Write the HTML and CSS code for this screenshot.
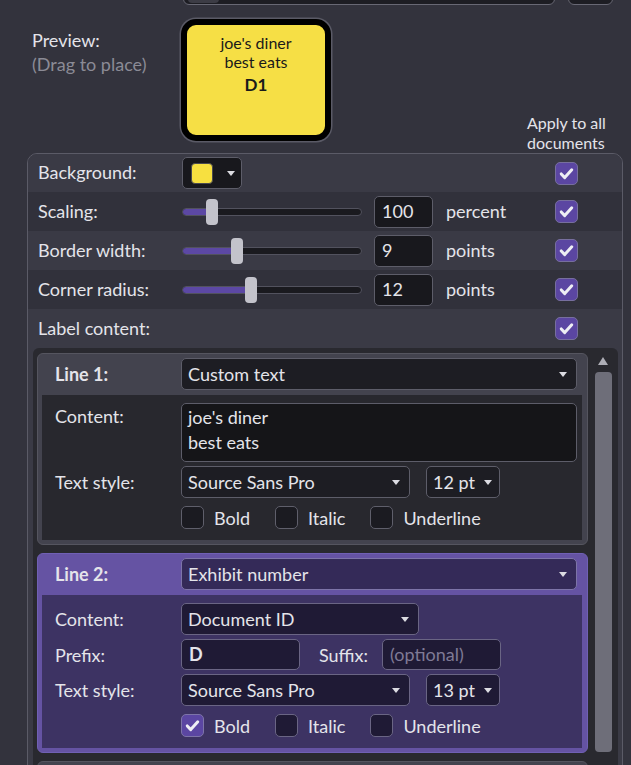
FILE: index.html
```html
<!DOCTYPE html>
<html>
<head>
    <title>Label settings</title>
    <link rel="stylesheet" href="styles.css">
</head>
<body>
    <div class="top-strip">
        <div class="stub wide"><span class="stub-knob"></span></div>
        <div class="stub small"></div>
    </div>

    <div class="preview-row">
        <div class="preview-label">
            <div>Preview:</div>
            <div class="muted">(Drag to place)</div>
        </div>
        <div class="tile">
            <div>joe's diner</div>
            <div>best eats</div>
            <div class="tile-id">D1</div>
        </div>
        <div class="apply-all">Apply to all documents</div>
    </div>

    <div class="panel">
        <div class="row light">
            <span class="row-label">Background:</span>
            <div class="color-btn"><span class="swatch"></span><span class="caret"></span></div>
            <span class="check on"><svg viewBox="0 0 24 24"><path d="M6 12.5l4 4.2 8-9"/></svg></span>
        </div>
        <div class="row dark">
            <span class="row-label">Scaling:</span>
            <div class="slider"><span class="fill" style="width: 29px"></span><span class="handle" style="left: 23px"></span></div>
            <div class="num">100</div>
            <span class="unit">percent</span>
            <span class="check on"><svg viewBox="0 0 24 24"><path d="M6 12.5l4 4.2 8-9"/></svg></span>
        </div>
        <div class="row light">
            <span class="row-label">Border width:</span>
            <div class="slider"><span class="fill" style="width: 54px"></span><span class="handle" style="left: 48px"></span></div>
            <div class="num">9</div>
            <span class="unit">points</span>
            <span class="check on"><svg viewBox="0 0 24 24"><path d="M6 12.5l4 4.2 8-9"/></svg></span>
        </div>
        <div class="row dark">
            <span class="row-label">Corner radius:</span>
            <div class="slider"><span class="fill" style="width: 68px"></span><span class="handle" style="left: 62px"></span></div>
            <div class="num">12</div>
            <span class="unit">points</span>
            <span class="check on"><svg viewBox="0 0 24 24"><path d="M6 12.5l4 4.2 8-9"/></svg></span>
        </div>
        <div class="row light">
            <span class="row-label">Label content:</span>
            <span class="check on"><svg viewBox="0 0 24 24"><path d="M6 12.5l4 4.2 8-9"/></svg></span>
        </div>

        <div class="list">
            <div class="cards">
                <div class="card">
                    <div class="card-head">
                        <span class="card-title">Line 1:</span>
                        <div class="select grow">Custom text<span class="caret"></span></div>
                    </div>
                    <div class="card-body">
                        <div class="field">
                            <span class="field-label top">Content:</span>
                            <div class="textarea">joe's diner<br>best eats</div>
                        </div>
                        <div class="field">
                            <span class="field-label">Text style:</span>
                            <div class="select font">Source Sans Pro<span class="caret"></span></div>
                            <div class="select size">12 pt<span class="caret"></span></div>
                        </div>
                        <div class="field styles">
                            <span class="check"></span><span class="opt">Bold</span>
                            <span class="check"></span><span class="opt">Italic</span>
                            <span class="check"></span><span class="opt">Underline</span>
                        </div>
                    </div>
                </div>

                <div class="card active">
                    <div class="card-head">
                        <span class="card-title">Line 2:</span>
                        <div class="select grow">Exhibit number<span class="caret"></span></div>
                    </div>
                    <div class="card-body">
                        <div class="field">
                            <span class="field-label">Content:</span>
                            <div class="select doc">Document ID<span class="caret"></span></div>
                        </div>
                        <div class="field">
                            <span class="field-label">Prefix:</span>
                            <div class="input short prefix">D</div>
                            <span class="suffix-label">Suffix:</span>
                            <div class="input short placeholder">(optional)</div>
                        </div>
                        <div class="field">
                            <span class="field-label">Text style:</span>
                            <div class="select font">Source Sans Pro<span class="caret"></span></div>
                            <div class="select size">13 pt<span class="caret"></span></div>
                        </div>
                        <div class="field styles">
                            <span class="check on"><svg viewBox="0 0 24 24"><path d="M6 12.5l4 4.2 8-9"/></svg></span><span class="opt">Bold</span>
                            <span class="check"></span><span class="opt">Italic</span>
                            <span class="check"></span><span class="opt">Underline</span>
                        </div>
                    </div>
                </div>

                <div class="card next"></div>
            </div>
            <div class="scrollbar">
                <span class="arrow-up"></span>
                <span class="thumb"></span>
            </div>
        </div>
    </div>
</body>
</html>
```

FILE: styles.css
```css
body {
    margin: 0;
    background-color: #33333d;
    color: #e4e4ea;
    font-family: Lato, "Noto Sans", sans-serif;
    font-size: 18px;
    overflow: hidden;
}

.top-strip {
    height: 5px;
    overflow: hidden;
    display: flex;
    align-items: flex-end;
    padding-left: 183px;
}
.stub {
    height: 30px;
    box-sizing: border-box;
    border: 1.5px solid #686874;
    border-radius: 6px;
    background-color: #1d1d23;
    flex-shrink: 0;
}
.stub.wide {
    width: 372px;
    padding: 0 0 0 4px;
}
.stub-knob {
    display: block;
    width: 31px;
    height: 27px;
    border-radius: 4px;
    background-color: #3c3c45;
}
.stub.small {
    width: 45px;
    margin-left: 13px;
}

.preview-row {
    display: flex;
    align-items: flex-start;
    margin-top: 14px;
}
.preview-label {
    width: 181px;
    padding: 9px 0 0 32px;
    line-height: 24px;
    box-sizing: border-box;
    flex-shrink: 0;
}
.muted {
    color: #8b8b96;
}
.tile {
    width: 150px;
    height: 122px;
    box-sizing: border-box;
    border: 6px solid #000;
    border-radius: 15px;
    box-shadow: 0 0 0 1.5px #5a5a66;
    background-color: #f6df45;
    color: #1a1a1a;
    text-align: center;
    font-size: 16px;
    line-height: 19px;
    padding-top: 8px;
    margin-bottom: 12px;
}
.tile-id {
    font-weight: bold;
    font-size: 17px;
    margin-top: 4px;
}
.apply-all {
    align-self: flex-end;
    margin-left: auto;
    margin-right: 20px;
    width: 84px;
    font-size: 16px;
    line-height: 20px;
}

.panel {
    margin-left: 27px;
    width: 596px;
    box-sizing: border-box;
    border: 1px solid #5b5b67;
    border-radius: 10px;
    background-color: #3a3a45;
    overflow: hidden;
    height: 640px;
}
.row {
    height: 39px;
    display: flex;
    align-items: center;
    padding-left: 10px;
}
.row:first-child {
    height: 38px;
}
.row.light {
    background-color: #3a3a45;
}
.row.dark {
    background-color: #31313b;
}
.row-label {
    width: 144px;
    flex-shrink: 0;
    margin-top: -2px;
}

.check {
    width: 23px;
    height: 23px;
    box-sizing: border-box;
    border: 1.5px solid #5f5f6b;
    border-radius: 5px;
    background-color: #1b1b21;
    display: inline-flex;
    align-items: center;
    justify-content: center;
    flex-shrink: 0;
}
.check.on {
    background-color: #5b46a2;
    border-color: #776f9e;
}
.check svg {
    width: 21px;
    height: 21px;
}
.check path {
    fill: none;
    stroke: #eeeef4;
    stroke-width: 3.4;
    stroke-linecap: round;
    stroke-linejoin: round;
}
.row .check {
    margin-left: auto;
    margin-right: 44px;
}

.caret {
    width: 0;
    height: 0;
    border-left: 4px solid transparent;
    border-right: 4px solid transparent;
    border-top: 5px solid #dcdce2;
    margin-left: auto;
}

.color-btn {
    width: 60px;
    height: 32px;
    box-sizing: border-box;
    border: 1.5px solid #5d5d69;
    border-radius: 5px;
    background-color: #18181d;
    display: flex;
    align-items: center;
    padding: 0 6px 0 8px;
}
.swatch {
    width: 22px;
    height: 21px;
    box-sizing: border-box;
    border: 1.5px solid #4a4a50;
    border-radius: 4px;
    background-color: #f7e040;
}

.slider {
    position: relative;
    width: 180px;
    height: 8px;
    box-sizing: border-box;
    border: 1px solid #52525e;
    border-radius: 4px;
    background-color: #1a1a1f;
}
.fill {
    display: block;
    height: 100%;
    border-radius: 3px;
    background-color: #5c48a4;
}
.handle {
    position: absolute;
    top: -10px;
    width: 12px;
    height: 26px;
    border-radius: 4px;
    background-color: #c3c3cb;
}
.num {
    width: 59px;
    height: 32px;
    box-sizing: border-box;
    margin-left: 12px;
    border: 1.5px solid #5d5d69;
    border-radius: 5px;
    background-color: #18181d;
    padding-left: 7px;
    line-height: 28px;
}
.unit {
    margin-left: 13px;
    margin-top: -2px;
}

.list {
    margin: 0 4px 0 5px;
    background-color: #29292f;
    border-radius: 6px 6px 0 0;
    display: flex;
    padding: 5px 0 0 4px;
    height: 600px;
}
.cards {
    width: 551px;
    display: flex;
    flex-direction: column;
    gap: 8px;
}
.card {
    border: 1px solid #55555f;
    border-radius: 6px;
    background-color: #43434e;
}
.card.next {
    height: 60px;
    flex-shrink: 0;
}
.card-head {
    display: flex;
    align-items: center;
    padding: 4px 10px 5px 17px;
}
.card-title {
    width: 126px;
    font-weight: bold;
    flex-shrink: 0;
}
.select {
    height: 32px;
    box-sizing: border-box;
    border: 1.5px solid #5d5d69;
    border-radius: 5px;
    background-color: #1d1d23;
    display: flex;
    align-items: center;
    padding: 0 9px 0 6px;
}
.select.grow {
    flex: 1;
}
.select.font {
    width: 229px;
}
.select.size {
    width: 74px;
    margin-left: 16px;
    padding-right: 7px;
}
.select.doc {
    width: 238px;
}
.card-body {
    margin: 0 5px 4px 4px;
    background-color: #28282e;
    padding: 8px 5px 11px 13px;
    display: flex;
    flex-direction: column;
    gap: 4px;
}
.field {
    display: flex;
    align-items: center;
}
.field-label {
    width: 126px;
    flex-shrink: 0;
}
.field-label.top {
    align-self: flex-start;
    padding-top: 2px;
}
.textarea {
    flex: 1;
    height: 59px;
    box-sizing: border-box;
    border: 1.5px solid #5d5d69;
    border-radius: 5px;
    background-color: #151518;
    padding: 1px 6px;
    line-height: 25px;
}
.field.styles {
    margin: 4px 0 0 126px;
}
.opt {
    margin: 0 25px 0 10px;
}
.input {
    height: 31px;
    box-sizing: border-box;
    border: 1.5px solid #6a6584;
    border-radius: 5px;
    background-color: #1f1a35;
    padding-left: 7px;
    line-height: 28px;
}
.input.short {
    width: 119px;
}
.prefix {
    font-weight: bold;
}
.placeholder {
    color: #7f7a96;
}
.suffix-label {
    width: 82px;
    padding-left: 19px;
    box-sizing: border-box;
    flex-shrink: 0;
}

.card.active {
    border-color: #7060b4;
    background-color: #6553a3;
}
.card.active .card-head .select {
    background-color: #342a58;
    border-color: #7d74a8;
}
.card.active .card-body {
    background-color: #3d3363;
}
.card.active .card-body .select {
    background-color: #1f1a35;
    border-color: #6a6584;
}
.card.active .check {
    background-color: #1f1a35;
    border-color: #6a6584;
}
.card.active .check.on {
    background-color: #5b46a2;
    border-color: #7d74a8;
}

.scrollbar {
    width: 18px;
    margin-left: 6px;
    display: flex;
    flex-direction: column;
    align-items: center;
    padding-top: 4px;
}
.arrow-up {
    width: 0;
    height: 0;
    border-left: 5px solid transparent;
    border-right: 5px solid transparent;
    border-bottom: 8px solid #aeaeb6;
}
.thumb {
    width: 17px;
    height: 380px;
    margin-top: 7px;
    border-radius: 4px;
    background-color: #6e6e79;
}
```
